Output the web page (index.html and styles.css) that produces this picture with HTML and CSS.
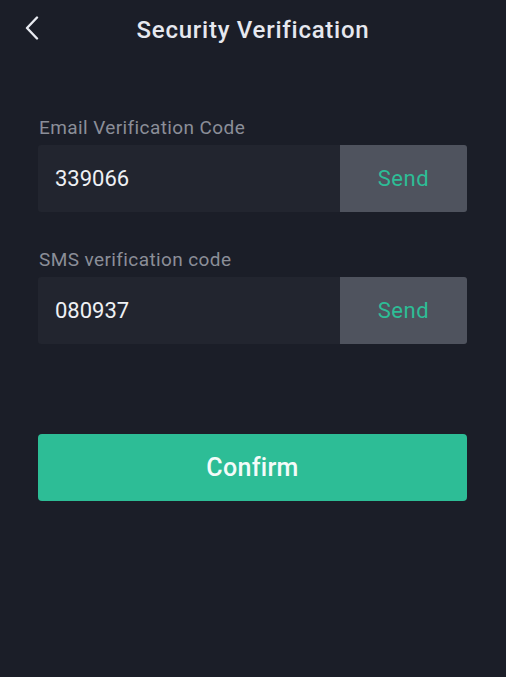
FILE: index.html
```html
<!DOCTYPE html>
<html>
<head>
<meta charset="utf-8">
<link rel="stylesheet" href="styles.css">
</head>
<body>
<div class="page">
  <header class="topbar">
    <span class="back">
      <svg width="14" height="24" viewBox="0 0 14 24"><path d="M12 1.5 L2 12 L12 22.5" fill="none" stroke="#e8eaf0" stroke-width="2.4" stroke-linecap="round" stroke-linejoin="round"/></svg>
    </span>
    <h1 class="title">Security Verification</h1>
  </header>
  <main class="form">
    <div class="field">
      <div class="label">Email Verification Code</div>
      <div class="inputrow">
        <div class="value">339066</div>
        <div class="send">Send</div>
      </div>
    </div>
    <div class="field">
      <div class="label">SMS verification code</div>
      <div class="inputrow">
        <div class="value">080937</div>
        <div class="send">Send</div>
      </div>
    </div>
    <div class="confirm">Confirm</div>
  </main>
</div>
</body>
</html>
```
FILE: styles.css
```css
html, body {
  margin: 0;
  padding: 0;
  background: #1b1e28;
}
body {
  font-family: Roboto, "Noto Sans", sans-serif;
  width: 506px;
  height: 677px;
  overflow: hidden;
}
.page {
  display: flex;
  flex-direction: column;
}
.topbar {
  position: relative;
  height: 60px;
  display: flex;
  align-items: center;
  justify-content: center;
}
.back {
  position: absolute;
  left: 25px;
  top: 16px;
  display: flex;
}
.title {
  margin: 0;
  font-size: 24px;
  font-weight: 500;
  color: #e6e8ef;
  letter-spacing: 0.75px;
  line-height: 28px;
}
.form {
  padding: 57px 39px 0 38px;
  display: flex;
  flex-direction: column;
  gap: 37px;
}
.field {
  display: flex;
  flex-direction: column;
}
.label {
  font-size: 19px;
  color: #8b8e98;
  line-height: 22px;
  height: 22px;
  margin-left: 1px;
  margin-bottom: 6px;
  letter-spacing: 0.4px;
}
.inputrow {
  display: flex;
  height: 67px;
  border-radius: 3px;
  overflow: hidden;
  background: #22252f;
}
.value {
  flex: 1;
  display: flex;
  align-items: center;
  padding-left: 17px;
  font-size: 22px;
  color: #eef0f4;
}
.send {
  width: 127px;
  display: flex;
  align-items: center;
  justify-content: center;
  background: #4f535e;
  color: #2dbd96;
  font-size: 22px;
  letter-spacing: 0.6px;
}
.confirm {
  margin-top: 53px;
  height: 67px;
  border-radius: 4px;
  background: #2dbd96;
  color: #f4fbf9;
  font-size: 25px;
  font-weight: 500;
  letter-spacing: 0.3px;
  display: flex;
  align-items: center;
  justify-content: center;
}
```
